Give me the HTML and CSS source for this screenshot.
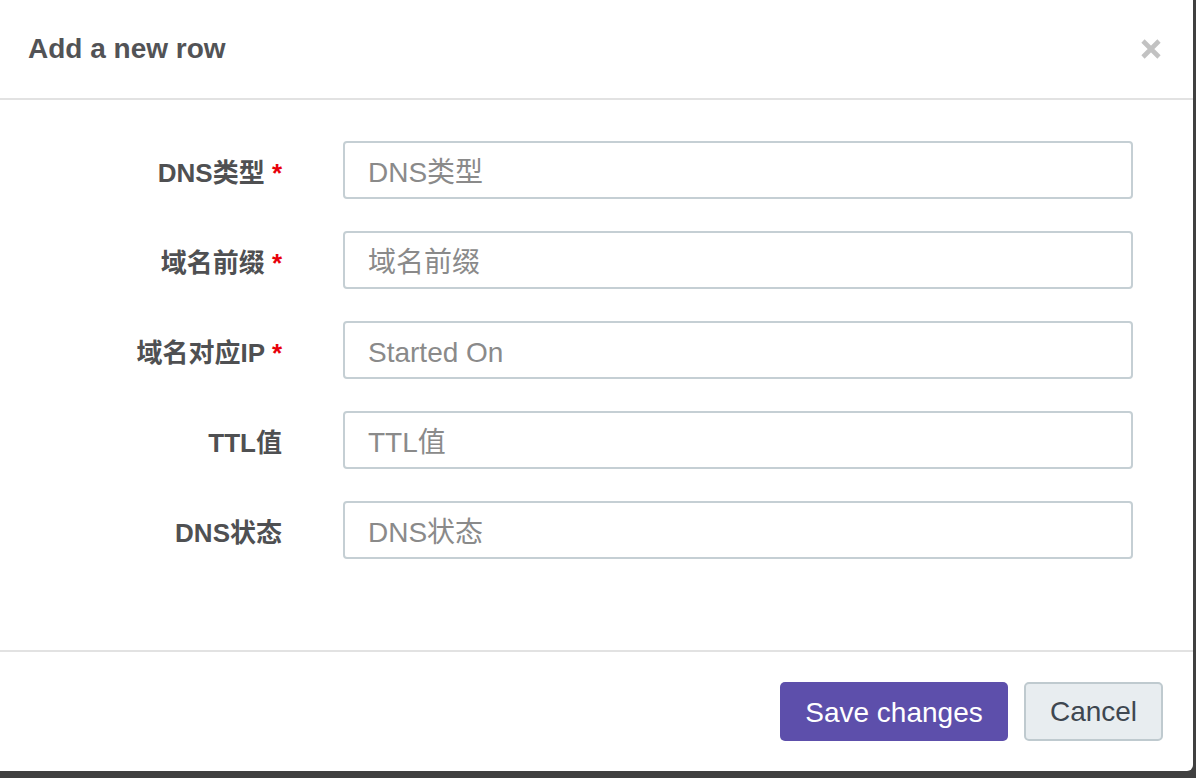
FILE: index.html
```html
<!DOCTYPE html>
<html lang="zh">
<head>
<meta charset="utf-8">
<title>Add a new row</title>
<link rel="stylesheet" href="styles.css">
</head>
<body>
<div class="modal">
  <div class="modal-header">
    <h4 class="modal-title">Add a new row</h4>
    <button class="close" type="button" aria-label="Close">
      <svg width="20" height="20" viewBox="0 0 20 20"><path d="M2 2 L18 18 M18 2 L2 18" stroke="#c2c2c2" stroke-width="4.6" stroke-linecap="butt"/></svg>
    </button>
  </div>
  <form class="modal-body">
    <label class="field-label">DNS类型 <span class="req">*</span></label>
    <input class="field-input" type="text" placeholder="DNS类型">
    <label class="field-label">域名前缀 <span class="req">*</span></label>
    <input class="field-input" type="text" placeholder="域名前缀">
    <label class="field-label">域名对应IP <span class="req">*</span></label>
    <input class="field-input" type="text" placeholder="Started On">
    <label class="field-label">TTL值</label>
    <input class="field-input" type="text" placeholder="TTL值">
    <label class="field-label">DNS状态</label>
    <input class="field-input" type="text" placeholder="DNS状态">
  </form>
  <div class="modal-footer">
    <button class="btn btn-primary" type="button">Save changes</button>
    <button class="btn btn-default" type="button">Cancel</button>
  </div>
</div>
</body>
</html>
```
FILE: styles.css
```css
html, body {
  margin: 0;
  padding: 0;
}
body {
  background: #404040;
  width: 1196px;
  height: 778px;
  overflow: hidden;
  font-family: "Liberation Sans", Arial, "Noto Sans CJK SC", sans-serif;
}
.modal {
  width: 1193px;
  height: 771px;
  background: #fff;
  border-bottom-right-radius: 6px;
  display: flex;
  flex-direction: column;
}
.modal-header {
  display: flex;
  align-items: center;
  justify-content: space-between;
  padding: 33px 32px 33px 28px;
  border-bottom: 2px solid #e2e2e2;
}
.modal-title {
  margin: 0;
  font-size: 28px;
  line-height: 32px;
  font-weight: bold;
  color: #525356;
}
.close {
  border: 0;
  background: none;
  padding: 0;
  width: 20px;
  height: 20px;
  display: block;
  cursor: pointer;
}
.close svg { display: block; }
.modal-body {
  margin: 0;
  padding: 41px 60px 91px 0;
  display: grid;
  grid-template-columns: 282px 790px;
  column-gap: 61px;
  row-gap: 32px;
}
.field-label {
  text-align: right;
  font-size: 26px;
  line-height: 30px;
  font-weight: bold;
  color: #4f5052;
  padding-top: 17px;
  white-space: nowrap;
}
.req {
  color: #e8000b;
}
.field-input {
  box-sizing: border-box;
  width: 790px;
  height: 58px;
  margin: 0;
  border: 2px solid #c5cfd4;
  border-radius: 4px;
  padding: 13px 22px 8px 23px;
  font-family: "Liberation Sans", Arial, "Noto Sans CJK SC", sans-serif;
  font-size: 28px;
  line-height: 32px;
  color: #555;
  background: #fff;
  outline: none;
}
.field-input::placeholder {
  color: #8a8a8a;
  opacity: 1;
}
.modal-footer {
  flex: 1;
  border-top: 2px solid #e2e2e2;
  display: flex;
  justify-content: flex-end;
  align-items: flex-start;
  gap: 16px;
  padding: 30px 30px 0 0;
}
.btn {
  box-sizing: border-box;
  height: 59px;
  margin: 0;
  border-radius: 5px;
  font-family: "Liberation Sans", Arial, sans-serif;
  font-size: 28px;
  line-height: 32px;
  padding: 2px 0 0 0;
  cursor: pointer;
}
.btn-primary {
  width: 228px;
  background: #5d4fab;
  border: 0;
  color: #fff;
}
.btn-default {
  width: 139px;
  background: #e8edf0;
  border: 2px solid #bfcacf;
  color: #3e4750;
  padding-top: 0;
}
```
